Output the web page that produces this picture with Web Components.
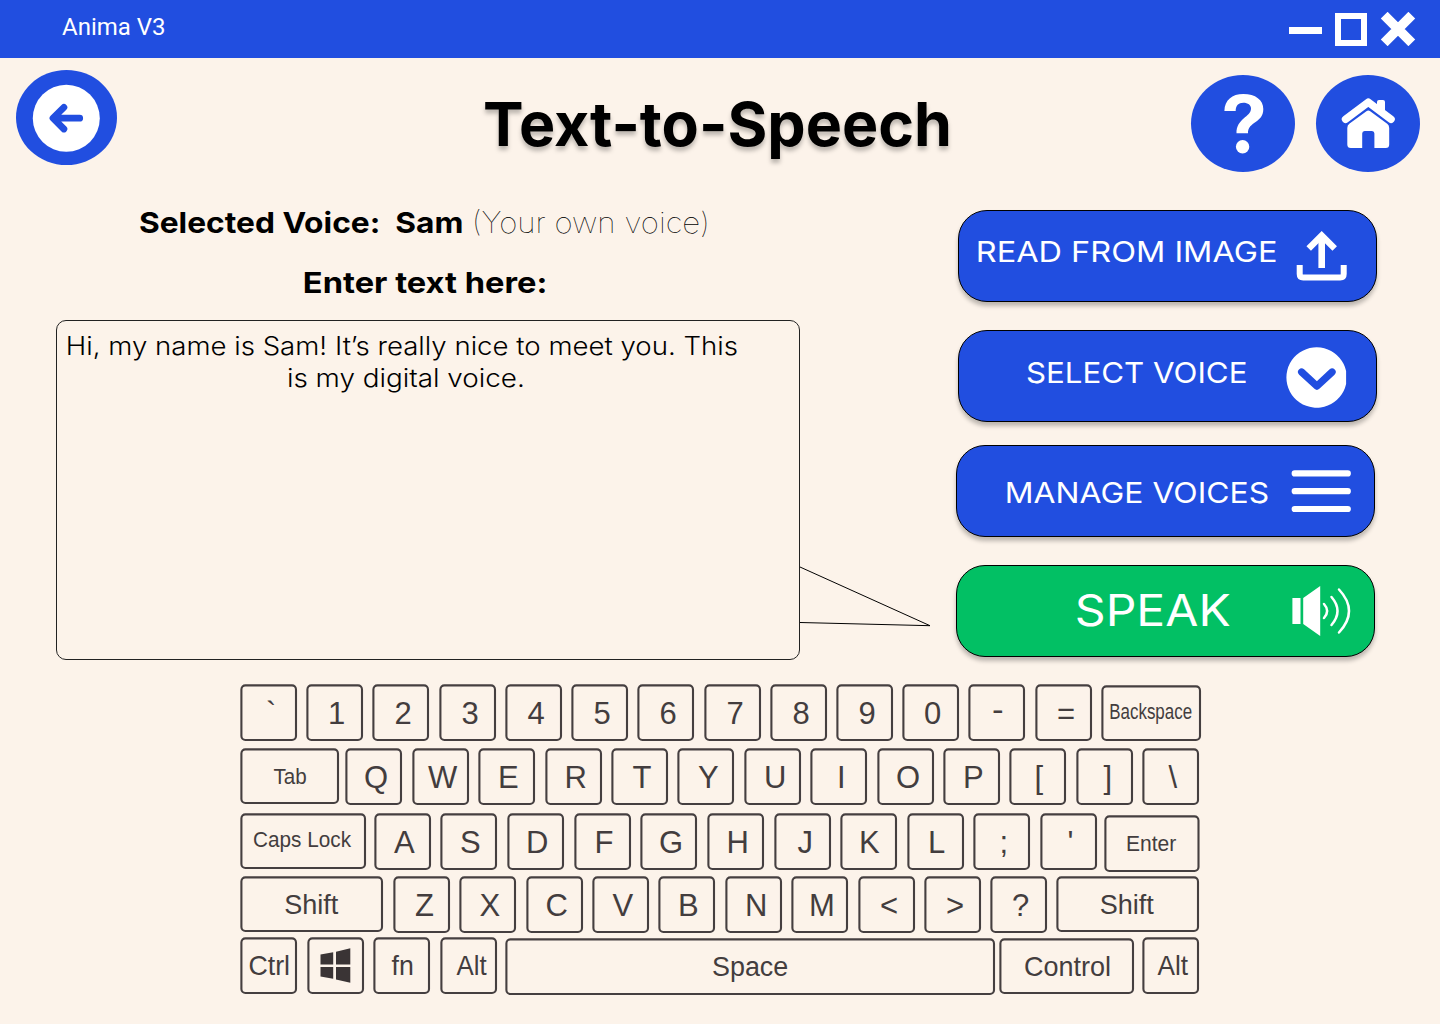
<!DOCTYPE html>
<html lang="en">
<head>
<meta charset="utf-8">
<title>Anima V3</title>
<style>
html, body { margin: 0; padding: 0; }
body { width: 1440px; height: 1024px; overflow: hidden; background: #fcf3ea; font-family: Inter, "Liberation Sans", sans-serif; }
</style>
</head>
<body>
<anima-app></anima-app>
<script>
const ctx = document.createElement('canvas').getContext('2d');

// Returns an SVG <text> whose ink starts at x and spans `width` (natural width when omitted).
function inkText(text, { x = 0, center, base, width, size, weight = 400, family = 'Inter', fill = 'currentColor' }) {
  ctx.font = `${weight} ${size}px "${family}"`;
  const m = ctx.measureText(text);
  const ink = m.actualBoundingBoxLeft + m.actualBoundingBoxRight;
  const s = width ? width / ink : 1;
  const left = center !== undefined ? center - ink * s / 2 : x;
  const tx = left + m.actualBoundingBoxLeft * s;
  const safe = text.replace(/&/g, '&amp;').replace(/</g, '&lt;');
  return `<text transform="translate(${tx.toFixed(2)} ${base}) scale(${s.toFixed(4)} 1)" font-family="${family}, 'Liberation Sans', sans-serif" font-size="${size}" font-weight="${weight}" fill="${fill}" xml:space="preserve">${safe}</text>`;
}

class Base extends HTMLElement {
  constructor() { super(); this.attachShadow({ mode: 'open' }); }
  connectedCallback() { this.shadowRoot.innerHTML = this.render(); }
  num(n, d) { return this.hasAttribute(n) ? +this.getAttribute(n) : d; }
}

// One line of text; the box is as tall as the capitals and its bottom is the baseline.
customElements.define('fit-text', class extends Base {
  render() {
    const size = this.num('size', 16), w = this.num('w', 100), h = Math.round(size * 0.727);
    return `<style>:host{display:block;flex:none;width:${w}px;height:${h}px}svg{display:block;overflow:visible}</style>
      <svg width="${w}" height="${h}">${inkText(this.getAttribute('text'), {
        base: h, width: w, size, weight: this.num('weight', 400), family: this.getAttribute('family') || 'Inter' })}</svg>`;
  }
});

customElements.define('title-bar', class extends Base {
  render() {
    return `<style>
      :host{display:flex;height:58px;background:#214ee0;color:#fff;padding:0 24px 0 62px;box-sizing:border-box;justify-content:space-between;align-items:flex-start}
      fit-text{margin-top:18px}
      svg{display:block;margin-top:12px}
    </style>
    <fit-text text="Anima V3" w="102" size="24" family="Roboto"></fit-text>
    <svg width="127" height="34" viewBox="0 0 127 34" fill="none" stroke="#fff">
      <path d="M0 18.5H33" stroke-width="7"/>
      <path d="M49 4H75V31H49Z" stroke-width="6"/>
      <path d="M95.2 3.2L122.8 30.8M122.8 3.2L95.2 30.8" stroke-width="9.6"/>
    </svg>`;
  }
});

customElements.define('round-button', class extends Base {
  render() {
    return `<style>:host{display:block;flex:none;border-radius:50%;background:#214ee0}</style><slot></slot>`;
  }
});

customElements.define('action-button', class extends Base {
  render() {
    return `<style>
      :host{display:flex;box-sizing:border-box;width:419px;height:92px;border:1px solid #000;border-radius:29px;background:var(--fill,#214ee0);color:#fff;box-shadow:0 4px 4px rgba(0,0,0,.25);align-items:flex-start}
    </style><slot></slot><slot name="icon"></slot>`;
  }
});

customElements.define('speech-box', class extends Base {
  render() {
    return `<style>
      :host{display:flex;align-items:flex-start}
      .box{box-sizing:border-box;width:744px;height:340px;border:1px solid #222;border-radius:10px;padding:15.5px 0 0 11px}
      .box fit-text + fit-text{margin:14.5px 0 0 220px}
      svg{display:block;margin:246px 0 0 -1px;overflow:visible}
    </style>
    <div class="box">
      <fit-text text="Hi, my name is Sam! It’s really nice to meet you. This" w="669" size="25.3" weight="360"></fit-text>
      <fit-text text="is my digital voice." w="234.5" size="25.3" weight="360"></fit-text>
    </div>
    <svg width="131" height="61" fill="none" stroke="#000" stroke-width="1"><path d="M1 1L131 59.7L1 56.5"/></svg>`;
  }
});

customElements.define('kb-key', class extends Base {
  render() {
    const w = this.num('w', 57), h = this.num('h', 57), label = this.getAttribute('label');
    const art = label === 'win'
      ? `<g fill="#3a3435"><path d="M13.5 17.6L26.2 15.2V27.4H13.5ZM29 14.7L43.3 11.2V27.4H29ZM13.5 30H26.2V41.8L13.5 39.6ZM29 30H43.3V45.8L29 42.4Z"/></g>`
      : inkText(label, { center: this.num('cx', w / 2 + 2.5), base: this.num('base', 40), width: this.num('lw'), size: this.num('size', 31), family: 'Liberation Sans', fill: '#433d3e' });
    return `<style>
      :host{display:block;flex:none;width:${w}px;height:${h}px;margin-top:${this.num('top', 0)}px}
      svg{display:block;overflow:visible}
    </style><svg width="${w}" height="${h}">
      <rect x="1.4" y="1.4" width="${w - 2.4}" height="${h - 2.4}" rx="4" fill="none" stroke="#453f40" stroke-width="2.1"/>${art}</svg>`;
  }
});

const row = (chars, extra = '') => [...chars].map(c => `<kb-key label="${c.replace('<', '&lt;')}" ${extra}></kb-key>`).join('');

customElements.define('on-screen-keyboard', class extends Base {
  render() {
    return `<style>
      :host{display:block;padding-left:240px}
      .row{display:flex;align-items:flex-start;height:57px}
      .r1{gap:9.23px}
      .r2{gap:9.4px;margin-top:7px}
      .r3{gap:9.67px;margin-top:8px}
      .r4{gap:9.4px;margin-top:6px}
      .r5{margin-top:4px}
    </style>
    <div class="row r1">
      <kb-key label="\`" cx="31" base="40"></kb-key>${row('1234567890')}
      <kb-key label="-" cx="29.5" base="35.5" lw="9"></kb-key><kb-key label="=" base="39.5"></kb-key>
      <kb-key label="Backspace" w="100" h="56" top="1" size="22" lw="82" cx="50" base="33.5"></kb-key>
    </div>
    <div class="row r2">
      <kb-key label="Tab" w="99" h="56" size="22" lw="33" cx="50" base="35.5" style="margin-right:-3px"></kb-key>${row('QWERTYUIOP[]\\')}
    </div>
    <div class="row r3">
      <kb-key label="Caps Lock" w="126" h="56" size="22" lw="98" cx="63" base="34" style="margin-right:-2.1px"></kb-key>${row("ASDFGHJKL;'", 'cx="30.6"')}
      <kb-key label="Enter" w="95.5" h="57" top="2" size="22" lw="49" cx="47.5" base="36" style="margin-left:-3px"></kb-key>
    </div>
    <div class="row r4">
      <kb-key label="Shift" w="143" h="56" size="27.5" lw="53.5" cx="72" base="38" style="margin-right:.5px"></kb-key>${row('ZXCVBNM<>?')}
      <kb-key label="Shift" w="143" h="56" size="27.5" lw="53.5" cx="71.5" base="38" style="margin-left:-1px"></kb-key>
    </div>
    <div class="row r5">
      <kb-key label="Ctrl" size="27.5" lw="39.5" cx="29.2" base="38"></kb-key>
      <kb-key label="win" style="margin-left:9.7px"></kb-key>
      <kb-key label="fn" size="27.5" lw="21" cx="29" base="38" style="margin-left:9.7px"></kb-key>
      <kb-key label="Alt" size="27.5" lw="30.5" cx="31.7" base="38" style="margin-left:9.7px"></kb-key>
      <kb-key label="Space" w="490" top="1" size="27.5" lw="75" cx="245.5" base="38" style="margin-left:8px"></kb-key>
      <kb-key label="Control" w="135" h="56" top="1" size="27.5" lw="85" cx="68.5" base="38" style="margin-left:4px"></kb-key>
      <kb-key label="Alt" size="27.5" lw="31" cx="31" base="38" style="margin-left:8px"></kb-key>
    </div>`;
  }
});

customElements.define('anima-app', class extends Base {
  render() {
    return `<style>
      :host{display:block;width:1440px;height:1024px;background:#fcf3ea;color:#000}
      svg{display:block;flex:none;overflow:visible}
      header{display:flex;height:132px;align-items:flex-start;padding:0 20px 0 16px}
      .back{width:101px;height:95px;margin-top:12px}
      .title{margin:44px auto 0 368px;filter:drop-shadow(0 4px 2px rgba(0,0,0,.25))}
      .big{width:104px;height:97px;margin-top:17px}
      .home{margin-left:21px}
      main{display:flex;height:494px;padding-left:56px}
      .left{width:900px}
      .voice{display:flex;gap:13px;margin:22px 0 0 83.5px}
      .enter{margin:39px 0 0 247.5px}
      speech-box{margin-top:27px}
      .actions{padding-top:20px}
      .actions .shift{margin-left:2px}
      .a2{margin-top:28px}.a3{margin-top:23px}.a4{margin-top:28px;--fill:#02c064}
    </style>
    <title-bar></title-bar>
    <header>
      <round-button class="back"><svg width="101" height="95" fill="none" stroke="#214ee0" stroke-width="6.8" stroke-linecap="round" stroke-linejoin="round">
        <circle cx="50.3" cy="48.2" r="33.5" fill="#fff" stroke="none"/><path d="M63.7 48.2H38M47.9 37.4L37 48.2L47.9 59"/></svg></round-button>
      <fit-text class="title" text="Text-to-Speech" w="464" size="61" weight="700"></fit-text>
      <round-button class="big"><svg width="104" height="97" fill="#fff">
        <path d="M33.4 36C33.7 25 41 19 52.3 19C64.5 19 72.3 25 72.3 34C72.3 48.5 57 46 57 58.3H45.5C45.3 43.5 60 42 60 33.5C60 30 57 27.7 52.3 27.7C47.5 27.7 44.7 30.5 44.7 36Z"/>
        <circle cx="51.6" cy="71.7" r="6.7"/></svg></round-button>
      <round-button class="big home"><svg width="104" height="97" fill="#fff">
        <path d="M61 33V27Q61 25 63 25H67Q69 25 69 27V38Z"/>
        <path d="M29.6 44.2L52.3 27.2L75 44.2" fill="none" stroke="#fff" stroke-width="7.6" stroke-linecap="round" stroke-linejoin="round"/>
        <path d="M50.4 36.2Q52.3 35 54.2 36.2L71.2 48.8Q73.2 50.4 73.2 53V69.5Q73.2 73 69.7 73H58.4V58.5Q58.4 56 56 56H48.6Q46.2 56 46.2 58.5V73H34.8Q31.3 73 31.3 69.5V53Q31.3 50.4 33.3 48.8Z"/></svg></round-button>
    </header>
    <main>
      <section class="left">
        <div class="voice">
          <fit-text text="Selected Voice:  Sam" w="322" size="29" weight="700"></fit-text>
          <fit-text text="(Your own voice)" w="231.5" size="29" weight="100"></fit-text>
        </div>
        <fit-text class="enter" text="Enter text here:" w="241.5" size="29" weight="700"></fit-text>
        <speech-box></speech-box>
      </section>
      <section class="actions">
        <action-button class="shift">
          <fit-text text="READ FROM IMAGE" w="298" size="29" style="margin:30px 0 0 19px"></fit-text>
          <svg slot="icon" width="50" height="50" style="margin:20px 0 0 20px" fill="none" stroke="#fff"><g transform="translate(.7 0)">
            <path d="M25 37V6" stroke-width="6.6"/><path d="M12 17.5L25 4.6L38 17.5" stroke-width="6.4"/>
            <path d="M3 34V43Q3 46.5 6.5 46.5H43.5Q47 46.5 47 43V34" stroke-width="6"/></g></svg>
        </action-button>
        <action-button class="shift a2">
          <fit-text text="SELECT VOICE" w="219" size="29" style="margin:31px 0 0 68px"></fit-text>
          <svg slot="icon" width="60" height="61" style="margin:16px 0 0 40px"><g transform="translate(.6 0)">
            <path d="M59.5 24V37A30.2 30.2 0 1 1 59.5 24Z" fill="#fff"/>
            <path d="M15 25L30.3 39.2L45.5 25" fill="none" stroke="#214ee0" stroke-width="7.2" stroke-linecap="round" stroke-linejoin="round"/></g></svg>
        </action-button>
        <action-button class="a3">
          <fit-text text="MANAGE VOICES" w="260.5" size="29" style="margin:36px 0 0 50px"></fit-text>
          <svg slot="icon" width="60" height="42" style="margin:24px 0 0 23.5px" stroke="#fff" stroke-width="6.2" stroke-linecap="round"><path d="M3.7 3.4H56.8M3.7 21.2H56.8M3.7 39H56.8"/></svg>
        </action-button>
        <action-button class="a4">
          <fit-text text="SPEAK" w="153.5" size="43.5" style="margin:28px 0 0 119.5px"></fit-text>
          <svg slot="icon" width="60" height="50" style="margin:20px 0 0 62px" fill="#fff">
            <path d="M.4 12H8.5V38H.4ZM11.2 12L28.2 0V50L11.2 38Z"/>
            <path d="M32 18Q38.3 25 32 32M39.5 11Q51.5 25 39.5 39M47 3.5Q67 25 47 46.5" fill="none" stroke="#fff" stroke-width="2.5" stroke-linecap="round"/></svg>
        </action-button>
      </section>
    </main>
    <on-screen-keyboard></on-screen-keyboard>`;
  }
});
</script>
</body>
</html>
